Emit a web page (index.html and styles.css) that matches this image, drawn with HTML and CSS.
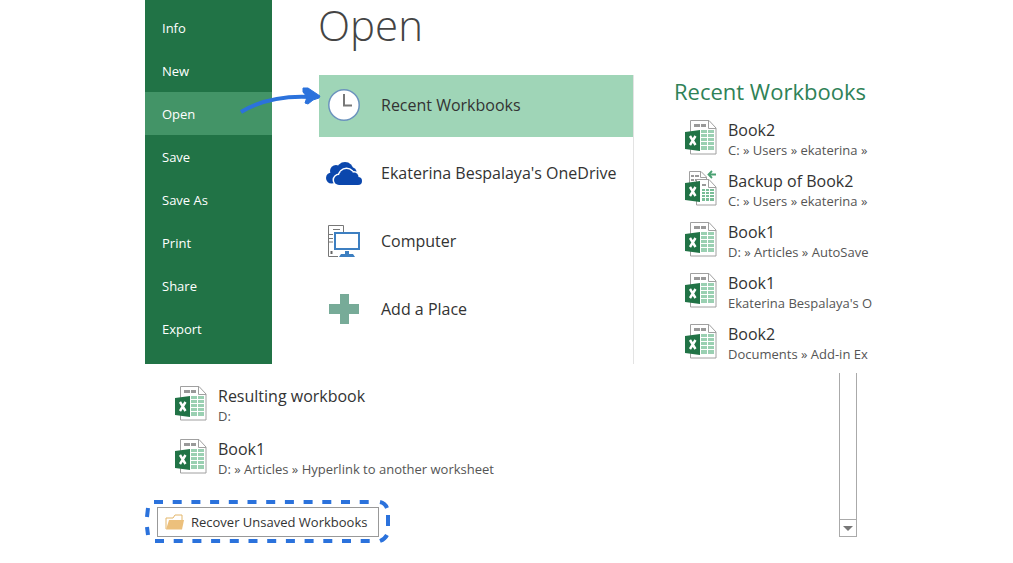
FILE: index.html
```html
<!DOCTYPE html>
<html lang="en">
  <head>
    <meta charset="UTF-8" />
    <meta name="viewport" content="width=device-width, initial-scale=1.0" />
    <link rel="stylesheet" href="styles.css">
    <title>Open</title>
  </head>

  <body>
    <svg class="sprite" aria-hidden="true">
      <symbol id="icon-workbook" viewBox="0 0 32 36">
        <path d="M5.5 1.5H24L31 9V35H5.5Z" fill="#fff" stroke="#a0a0a0" />
        <path d="M23.5 1.5V9.5H31" fill="none" stroke="#a0a0a0" />
        <path d="M9 5h6v3H9zM16 5h5v3h-5z" fill="#999" />
        <path d="M16 11h6v3h-6zM23 11h6v3h-6zM16 15h6v3h-6zM23 15h6v3h-6zM16 19h6v3h-6zM23 19h6v3h-6zM16 23h6v3h-6zM23 23h6v3h-6zM16 27h6v4h-6zM23 27h6v4h-6z" fill="#9ad0b2" />
        <path d="M0 13L15 11V32L0 30Z" fill="#217346" />
        <path d="M5 17L10.5 26M10.5 17L5 26" stroke="#fff" stroke-width="2.4" />
      </symbol>
      <symbol id="icon-backup" viewBox="0 0 32 36">
        <path d="M4.5 14V1.5H16L21.5 7V12" fill="#fff" stroke="#a0a0a0" />
        <path d="M15.5 1.5V7.5H21" fill="none" stroke="#a0a0a0" />
        <path d="M6 5h3v2H6zM10 5h4v2h-4zM6 9h3v2H6zM10 9h4v2h-4z" fill="#999" />
        <path d="M11.5 9.5H24L31 17V35H11.5Z" fill="#fff" stroke="#a0a0a0" />
        <path d="M23.5 9.5V17.5H31" fill="none" stroke="#a0a0a0" />
        <path d="M17 14h4v2h-4z" fill="#999" />
        <path d="M17 19h3v2h-3zM21 19h3v2h-3zM25 19h4v2h-4zM17 22h3v2h-3zM21 22h3v2h-3zM25 22h4v2h-4zM17 25h3v2h-3zM21 25h3v2h-3zM25 25h4v2h-4zM17 28h3v3h-3zM21 28h3v3h-3zM25 28h4v3h-4z" fill="#79bd97" />
        <path d="M0 13L15 11V32L0 30Z" fill="#217346" />
        <path d="M5 17L10.5 26M10.5 17L5 26" stroke="#fff" stroke-width="2.4" />
        <path d="M31 4.5H24M27 1L23.5 4.5L27 8" fill="none" stroke="#4ba173" stroke-width="1.8" />
      </symbol>
    </svg>

    <div class="page">
      <div class="backstage">
        <nav class="menu">
          <a class="menu__item" href="#">Info</a>
          <a class="menu__item" href="#">New</a>
          <a class="menu__item menu__item--active" href="#">Open</a>
          <a class="menu__item" href="#">Save</a>
          <a class="menu__item" href="#">Save As</a>
          <a class="menu__item" href="#">Print</a>
          <a class="menu__item" href="#">Share</a>
          <a class="menu__item" href="#">Export</a>
        </nav>
        <svg class="arrow" viewBox="0 0 84 30" aria-hidden="true">
          <path d="M2 26C22 14 45 9.5 72 11" fill="none" stroke="#2b72dc" stroke-width="4" />
          <path d="M64 2L69 2L81 10L80 12L74 14L69 18L66 17L68 11L64 6Z" fill="#2b72dc" stroke="#2b72dc" stroke-linejoin="round" />
        </svg>
        <main class="content">
          <h1 class="content__title">Open</h1>
          <div class="columns">
            <div class="places">
              <button type="button" class="place place--active">
                <svg class="place__icon" viewBox="0 0 36 36">
                  <circle cx="18" cy="18" r="15.2" fill="#fff" stroke="#6b93bd" stroke-width="1.5" />
                  <path d="M18 7V18.5H26" fill="none" stroke="#777" stroke-width="2" />
                </svg>
                Recent Workbooks
              </button>
              <button type="button" class="place">
                <svg class="place__icon" viewBox="0 0 36 36">
                  <g fill="#0b47ad">
                    <circle cx="5.5" cy="23" r="5.5" />
                    <circle cx="10" cy="16" r="6" />
                    <circle cx="19" cy="15.500" r="8.500" />
                    <circle cx="26" cy="17" r="4.500" />
                  </g>
                  <g id="cloud" fill="#0b47ad" stroke="#fff" stroke-width="3">
                    <circle cx="13" cy="25" r="5" />
                    <circle cx="20.500" cy="21.500" r="7.500" />
                    <circle cx="28" cy="22" r="4.500" />
                    <circle cx="32" cy="26" r="4" />
                  </g>
                  <g fill="#0b47ad">
                    <circle cx="13" cy="25" r="5" />
                    <circle cx="20.500" cy="21.500" r="7.500" />
                    <circle cx="28" cy="22" r="4.500" />
                    <circle cx="32" cy="26" r="4" />
                    <path d="M13 22h19v8H13z" />
                  </g>
                </svg>
                Ekaterina Bespalaya's OneDrive
              </button>
              <button type="button" class="place">
                <svg class="place__icon" viewBox="0 0 36 36">
                  <path d="M17.5 9V2.5H2.5V33.5H12M7 6.5h7M3 11.5h4M3 15.5h4M3 19h4" fill="none" stroke="#777" />
                  <path d="M4.5 28h2v3h-2z" fill="#666" />
                  <rect x="9" y="10" width="24" height="16" fill="#fff" stroke="#3d7fc1" stroke-width="2" />
                  <path d="M19 28h4v3h4l2 3H13l2-3h4z" fill="#3d7fc1" />
                </svg>
                Computer
              </button>
              <button type="button" class="place">
                <svg class="place__icon" viewBox="0 0 36 36">
                  <path d="M14 3h9v10h10v10H23v10h-9V23H3V13h11z" fill="#77ab98" />
                </svg>
                Add a Place
              </button>
            </div>
            <section class="recent">
              <h2 class="recent__title">Recent Workbooks</h2>
              <div class="files">
                <a class="file" href="#">
                  <svg class="file__icon"><use href="#icon-workbook" /></svg>
                  <span class="file__text">
                    <span class="file__name">Book2</span>
                    <span class="file__path">C: » Users » ekaterina »</span>
                  </span>
                </a>
                <a class="file" href="#">
                  <svg class="file__icon"><use href="#icon-backup" /></svg>
                  <span class="file__text">
                    <span class="file__name">Backup of Book2</span>
                    <span class="file__path">C: » Users » ekaterina »</span>
                  </span>
                </a>
                <a class="file" href="#">
                  <svg class="file__icon"><use href="#icon-workbook" /></svg>
                  <span class="file__text">
                    <span class="file__name">Book1</span>
                    <span class="file__path">D: » Articles » AutoSave</span>
                  </span>
                </a>
                <a class="file" href="#">
                  <svg class="file__icon"><use href="#icon-workbook" /></svg>
                  <span class="file__text">
                    <span class="file__name">Book1</span>
                    <span class="file__path">Ekaterina Bespalaya's O</span>
                  </span>
                </a>
                <a class="file" href="#">
                  <svg class="file__icon"><use href="#icon-workbook" /></svg>
                  <span class="file__text">
                    <span class="file__name">Book2</span>
                    <span class="file__path">Documents » Add-in Ex</span>
                  </span>
                </a>
              </div>
            </section>
          </div>
        </main>
      </div>

      <div class="more">
        <div class="more__list">
          <div class="files files--wide">
            <a class="file" href="#">
              <svg class="file__icon"><use href="#icon-workbook" /></svg>
              <span class="file__text">
                <span class="file__name">Resulting workbook</span>
                <span class="file__path">D:</span>
              </span>
            </a>
            <a class="file" href="#">
              <svg class="file__icon"><use href="#icon-workbook" /></svg>
              <span class="file__text">
                <span class="file__name">Book1</span>
                <span class="file__path">D: » Articles » Hyperlink to another worksheet</span>
              </span>
            </a>
          </div>
          <div class="highlight">
            <svg class="highlight__frame" viewBox="0 0 245 43" aria-hidden="true">
              <g fill="none" stroke="#2b72dc" stroke-width="4">
                <path d="M9 2H227M10 41H227" stroke-dasharray="9 9.7" />
                <path d="M2 17L3 8M2 27L3 35M235 2Q240 3 242 8M243 15V26M235 41Q240 39 242 35" />
              </g>
            </svg>
            <button type="button" class="recover">
              <svg class="recover__icon" viewBox="0 0 20 18">
                <path d="M1 16V5h7l2-3h7v5" fill="#fff" stroke="#e3b66b" />
                <path d="M1 16.5L4 7H19L17 16.5Z" fill="#ecc07c" />
              </svg>
              Recover Unsaved Workbooks
            </button>
          </div>
        </div>
        <div class="scrollbar">
          <button type="button" class="scrollbar__down" aria-label="Scroll down"></button>
        </div>
      </div>
    </div>
  </body>
</html>
```
FILE: styles.css
```css
* {
  box-sizing: border-box;
}
body {
  margin: 0;
  background-color: #fff;
  color: #333;
  font-family: "Open Sans", "Noto Sans", sans-serif;
}
button {
  font-family: inherit;
  color: inherit;
  cursor: pointer;
}
a {
  color: inherit;
  text-decoration: none;
}
.sprite {
  position: absolute;
  width: 0;
  height: 0;
}
.page {
  max-width: 723px;
  margin: 0 auto;
}

.backstage {
  position: relative;
  display: flex;
}
.menu {
  flex: 0 0 127px;
  padding: 6px 0 14px;
  background-color: #217346;
  color: #fff;
}
.menu__item {
  display: block;
  padding: 2px 17px 0;
  font-size: 13px;
  line-height: 41px;
}
.menu__item--active {
  background-color: #439467;
}
.arrow {
  position: absolute;
  left: 94px;
  top: 86px;
  width: 84px;
  height: 30px;
}

.content {
  flex: 1;
  min-width: 0;
  padding-left: 46px;
}
.content__title {
  margin: 0;
  height: 75px;
  font-size: 42px;
  font-weight: 300;
  line-height: 50px;
  color: #444;
}
.columns {
  display: flex;
  padding-left: 1px;
}
.places {
  flex: 0 0 315px;
  display: flex;
  flex-direction: column;
  gap: 6px;
  border-right: 1px solid #e3e3e3;
}
.place {
  display: flex;
  align-items: center;
  gap: 19px;
  height: 62px;
  padding: 0 7px 2px;
  border: 0;
  background: none;
  font-size: 16px;
  white-space: nowrap;
}
.place--active {
  background-color: #9fd5b7;
}
.place__icon {
  flex: none;
  width: 36px;
  height: 36px;
}

.recent {
  flex: 1;
  min-width: 0;
  padding-left: 40px;
  white-space: nowrap;
}
.recent__title {
  margin: 0 0 8px;
  font-size: 22px;
  font-weight: 400;
  line-height: 32px;
  color: #2f8257;
}
.files {
  display: flex;
  flex-direction: column;
  gap: 6px;
  padding-left: 11px;
}
.files--wide {
  gap: 8px;
  padding-left: 30px;
}
.file {
  display: flex;
  gap: 11px;
  height: 45px;
}
.file__icon {
  flex: none;
  width: 32px;
  height: 36px;
  margin-top: 4px;
}
.file__text {
  display: flex;
  flex-direction: column;
  padding-top: 2px;
}
.file__name {
  font-size: 16px;
  line-height: 26px;
}
.file__path {
  font-size: 13px;
  line-height: 14px;
  color: #555;
}

.more {
  display: flex;
  justify-content: space-between;
  padding: 9px 11px 0 0;
}
.more__list {
  padding-top: 8px;
}
.highlight {
  position: relative;
  width: 245px;
  margin-top: 21px;
  padding: 7px 11px 6px 12px;
}
.highlight__frame {
  position: absolute;
  left: 0;
  top: 0;
  width: 100%;
  height: 100%;
}
.recover {
  position: relative;
  display: flex;
  align-items: center;
  gap: 6px;
  width: 100%;
  height: 30px;
  padding: 0 7px;
  border: 1px solid #999;
  background-color: #fff;
  font-size: 13px;
  white-space: nowrap;
}
.recover__icon {
  flex: none;
  width: 20px;
  height: 18px;
}
.scrollbar {
  display: flex;
  align-items: flex-end;
  width: 18px;
  height: 164px;
  border: solid #aaa;
  border-width: 0 1px;
}
.scrollbar__down {
  display: flex;
  align-items: center;
  justify-content: center;
  width: 100%;
  height: 18px;
  padding: 0;
  border: solid #aaa;
  border-width: 1px 0;
  background-color: #fff;
}
.scrollbar__down::before {
  content: "";
  border: solid transparent;
  border-width: 5px 5px 0;
  border-top-color: #777;
}
```
